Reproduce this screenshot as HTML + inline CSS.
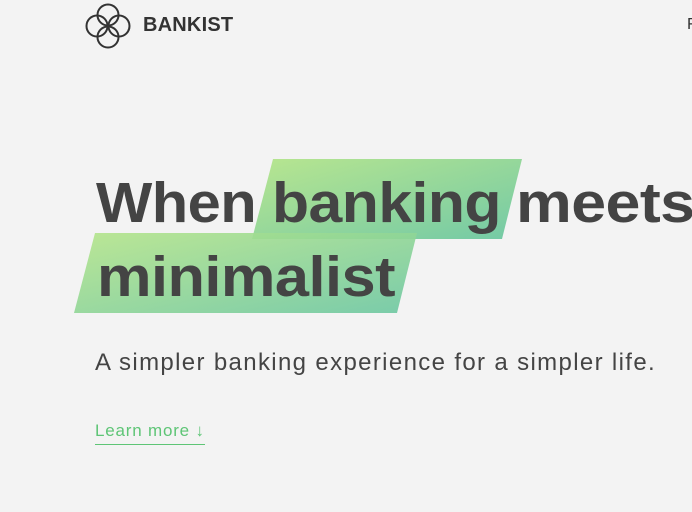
<!DOCTYPE html>
<html><head><style>
body{margin:0;width:692px;height:512px;background:#f3f3f3;overflow:hidden;font-family:"Liberation Sans",sans-serif;color:#444;position:relative}
.a{position:absolute}
.h{font-weight:bold;font-size:57px;letter-spacing:-0.5px;white-space:nowrap;line-height:1;transform-origin:0 0}
</style></head><body>
<svg class="a" style="left:84px;top:2px" width="48" height="48" viewBox="0 0 48 48" fill="none" stroke="#333" stroke-width="2">
<circle cx="24" cy="13" r="10.5"/><circle cx="24" cy="35" r="10.5"/><circle cx="13" cy="24" r="10.5"/><circle cx="35" cy="24" r="10.5"/>
</svg>
<div class="a" style="left:143px;top:14px;font-size:20px;font-weight:bold;color:#333;letter-spacing:0.2px">BANKIST</div>
<div class="a" style="left:687px;top:16px;font-size:16px;color:#333">F</div>
<svg class="a" style="left:0;top:0" width="692" height="330">
<defs><linearGradient id="g" x1="0" y1="0" x2="1" y2="1"><stop offset="0" stop-color="#b5e58a"/><stop offset="1" stop-color="#6cc7a2"/></linearGradient></defs>
<polygon points="273,159 522,159 502,239 252,239" fill="url(#g)" opacity="0.95"/>
<polygon points="95,233 417,233 397,313 74,313" fill="url(#g)" opacity="0.9"/>
</svg>
<div class="a h" style="left:96px;top:175px;transform:scaleX(1.046)">When</div>
<div class="a h" style="left:272px;top:175px;transform:scaleX(1.065)">banking</div>
<div class="a h" style="left:516px;top:175px;transform:scaleX(1.1)">meets</div>
<div class="a h" style="left:97px;top:249px;transform:scaleX(1.076)">minimalist</div>
<div class="a" style="left:95px;top:349px;font-size:24px;color:#444;letter-spacing:1.35px;white-space:nowrap">A simpler banking experience for a simpler life.</div>
<div class="a" style="left:95px;top:421px;font-size:17px;color:#5ec576;border-bottom:1px solid #5ec576;padding-bottom:3px;letter-spacing:0.8px">Learn more ↓</div>
</body></html>
